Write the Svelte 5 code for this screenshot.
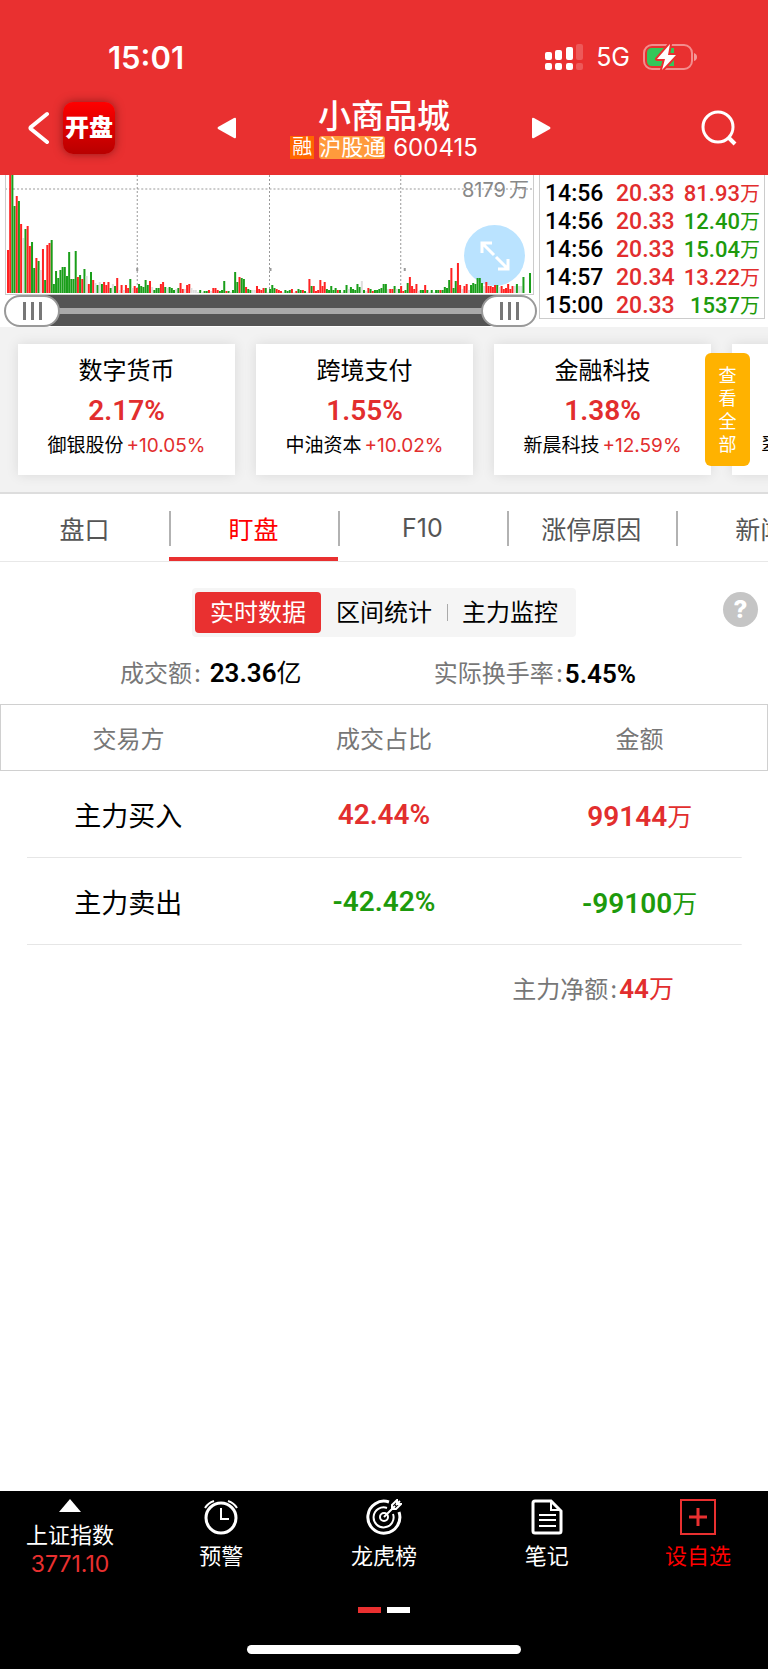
<script>
  // r = up, g = down, x = flat; number is the bar height in px
  const volume =
    'r43 r120 g120 g87 r97 g92 r69 x55 g64 r67 r47 g51 g25 r35 g32 x23 r44 g13 r48 r50 g53 g9 g22 g15 g23 g26 g26 g17 g41 g14 ' +
    'g14 g42 r16 g18 r14 g24 x17 r9 g21 r13 x10 g8 x11 g9 r11 r8 r11 g5 x9 g7 r15 x3 r8 x3 r8 r5 g14 x5 r7 r5 ' +
    'g9 g7 g6 g13 g8 r12 x6 g3 g5 g5 r9 r11 g6 x5 g6 g5 g3 x4 g5 r10 r4 x4 r8 r9 x5 x3 x3 x1 g3 x1 ' +
    'g2 g2 r3 x2 r5 r5 r3 g2 g3 g12 r2 g2 x1 g3 g21 g11 r16 g15 g14 r6 g4 g3 x3 x3 r7 r4 r3 r5 g5 x1 ' +
    'g4 g8 g5 r4 r3 r2 x1 g3 g2 g3 r4 x1 r2 g4 g3 r3 g2 x1 r14 g7 r7 r2 r3 r13 r7 r11 g4 g3 g7 g3 ' +
    'g5 r3 g3 x1 g3 g8 x4 g6 g4 g3 g9 g6 x12 g3 x2 r5 g4 r2 g3 g3 g4 g5 g9 g9 x4 r4 r4 g7 x4 g4 ' +
    'r7 r2 g3 g10 r16 r7 r4 r9 x2 g3 g3 r8 g3 x1 g3 x1 g3 g3 r3 g3 g6 g5 g13 r25 g5 g12 r30 r8 x4 r7 ' +
    'r9 x3 g8 g10 g9 g15 g15 g10 x7 r11 r7 r7 r6 r8 g8 x6 r7 r4 r5 r9 r4 r7 x7 g9 x7 x7 g16 x0 x0 g20';

  const bars = volume.split(' ').map((item, i) => ({
    kind: item[0],
    height: Number(item.slice(1)),
    x: 3 + i * 2.18
  }));

  const trades = [
    { time: '14:56', price: '20.33', amount: '81.93', up: true },
    { time: '14:56', price: '20.33', amount: '12.40', up: false },
    { time: '14:56', price: '20.33', amount: '15.04', up: false },
    { time: '14:57', price: '20.34', amount: '13.22', up: true },
    { time: '15:00', price: '20.33', amount: '1537', up: false }
  ];

  const concepts = [
    { name: '数字货币', change: '2.17%', stock: '御银股份', stockChange: '+10.05%' },
    { name: '跨境支付', change: '1.55%', stock: '中油资本', stockChange: '+10.02%' },
    { name: '金融科技', change: '1.38%', stock: '新晨科技', stockChange: '+12.59%' },
    { name: '', change: '', stock: '翠微股份', stockChange: '+10.00%' }
  ];

  const tabs = ['盘口', '盯盘', 'F10', '涨停原因', '新闻'];
  const modes = ['实时数据', '区间统计', '主力监控'];

  let activeTab = '盯盘';
  let activeMode = '实时数据';
  let rangeStart = 0;
  let rangeEnd = 100;
</script>

<div class="page">
  <header>
    <div class="status">
      <span class="clock">15:01</span>
      <svg width="38" height="26" viewBox="0 0 38 26" fill="#fff">
        <rect x="0" y="8" width="7" height="8" rx="2" />
        <rect x="10" y="6" width="7" height="10" rx="2" />
        <rect x="21" y="3" width="7" height="13" rx="2" />
        <rect x="31" y="0" width="7" height="16" rx="2" opacity=".2" />
        <rect x="0" y="19" width="7" height="7" rx="2" />
        <rect x="10" y="19" width="7" height="7" rx="2" />
        <rect x="21" y="19" width="7" height="7" rx="2" />
        <rect x="31" y="19" width="7" height="7" rx="2" opacity=".2" />
      </svg>
      <span class="network">5G</span>
      <svg width="54" height="28" viewBox="0 0 54 28">
        <rect x="1" y="2" width="48" height="24" rx="8" fill="none" stroke="#fff" stroke-opacity=".45" stroke-width="2" />
        <path d="M51 10q3 1 3 4t-3 4z" fill="#fff" opacity=".5" />
        <path d="M9 5h22v18H9q-5 0-5-5v-8q0-5 5-5z" fill="#34c759" />
        <path d="M27 1 14 16h8l-3 11 14-15h-8z" fill="#fff" stroke="#e93030" stroke-width="4" paint-order="stroke" stroke-linejoin="round" />
      </svg>
    </div>

    <nav class="title-bar">
      <div class="left">
        <button class="icon" aria-label="返回">
          <svg width="22" height="34" viewBox="0 0 22 34" fill="none" stroke="#fff" stroke-width="4" stroke-linecap="round" stroke-linejoin="round">
            <path d="M19 3 3 16q-1 1 0 2l16 13" />
          </svg>
        </button>
        <a class="logo" href="#home">开盘</a>
      </div>
      <div class="stock">
        <button class="icon" aria-label="上一只">
          <svg width="20" height="24" viewBox="0 0 20 24"><path d="M19 3v18q0 2-2 1L1 13q-1-1 0-2L17 2q2-1 2 1z" fill="#fff" /></svg>
        </button>
        <div class="name">
          <h1>小商品城</h1>
          <p><span class="tag rong">融</span><span class="tag hgt">沪股通</span><span>600415</span></p>
        </div>
        <button class="icon" aria-label="下一只">
          <svg width="20" height="24" viewBox="0 0 20 24"><path d="M1 3v18q0 2 2 1l16-9q1-1 0-2L3 2q-2-1-2 1z" fill="#fff" /></svg>
        </button>
      </div>
      <button class="icon search" aria-label="搜索">
        <svg width="36" height="36" viewBox="0 0 36 36" fill="none" stroke="#fff" stroke-width="3">
          <circle cx="17" cy="17" r="15" /><path d="m27 27 7 7" stroke-width="4" />
        </svg>
      </button>
    </nav>
  </header>

  <section class="market">
    <div class="chart">
      <svg class="bars" viewBox="0 0 532 120" preserveAspectRatio="none">
        <path d="M1 14H528M133 0V118M265 0V118M396 0V118" stroke="#999" stroke-dasharray="2 2" fill="none" />
        <path d="M1.5 0V119.5H528.5V0" stroke="#ccc" fill="none" />
        <path d="M133 93v3M266 93v3M400 93v3" stroke="#999" stroke-width="2" />
        {#each bars as bar}
          <rect class={bar.kind} x={bar.x} y={118 - bar.height} width="2" height={bar.height} />
        {/each}
      </svg>
      <span class="peak">8179<small>万</small></span>
      <button class="expand" aria-label="全屏">
        <svg width="30" height="30" viewBox="0 0 30 30" fill="none" stroke="#fff" stroke-width="3">
          <path d="M12 2H2v10M2 2l12 12M16 16l12 12M28 18v10H18" />
        </svg>
      </button>
      <div class="slider">
        <div class="track"></div>
        <input type="range" aria-label="开始时间" bind:value={rangeStart} />
        <input type="range" aria-label="结束时间" bind:value={rangeEnd} />
      </div>
    </div>

    <table class="trades">
      <tbody>
        {#each trades as trade}
          <tr>
            <td class="time">{trade.time}</td>
            <td class="price">{trade.price}</td>
            <td class="amount" class:up={trade.up} class:down={!trade.up}>{trade.amount}<small>万</small></td>
          </tr>
        {/each}
      </tbody>
    </table>
  </section>

  <section class="concepts">
    <div class="cards">
      {#each concepts as concept}
        <article class="card">
          <h2>{concept.name}</h2>
          <strong>{concept.change}</strong>
          <p>{concept.stock}<span>{concept.stockChange}</span></p>
        </article>
      {/each}
    </div>
    <button class="view-all">查看全部</button>
  </section>

  <nav class="tabs">
    {#each tabs as tab}
      <button class:active={activeTab === tab} on:click={() => (activeTab = tab)}>{tab}</button>
    {/each}
  </nav>

  <main>
    <div class="toolbar">
      <div class="modes">
        {#each modes as mode}
          <button class:active={activeMode === mode} on:click={() => (activeMode = mode)}>{mode}</button>
        {/each}
      </div>
      <button class="help" aria-label="帮助">?</button>
    </div>

    <div class="stats">
      <p>成交额<i>:</i>&nbsp;<b>23.36<small>亿</small></b></p>
      <p>实际换手率<i>:</i><b>5.45%</b></p>
    </div>

    <table class="flow">
      <thead>
        <tr><th>交易方</th><th>成交占比</th><th>金额</th></tr>
      </thead>
      <tbody>
        <tr>
          <td>主力买入</td>
          <td class="num up">42.44%</td>
          <td class="num up">99144<small>万</small></td>
        </tr>
        <tr>
          <td>主力卖出</td>
          <td class="num down">-42.42%</td>
          <td class="num down">-99100<small>万</small></td>
        </tr>
      </tbody>
    </table>
    <p class="net">主力净额<i>:</i><b class="up">44<small>万</small></b></p>
  </main>

  <footer>
    <div class="menu">
      <a class="index" href="#index">
        <svg width="22" height="14" viewBox="0 0 22 14"><path d="M11 0 22 13H0z" fill="#fff" /></svg>
        <span>上证指数</span>
        <span class="value">3771.10</span>
      </a>
      <a href="#alert">
        <svg width="36" height="36" viewBox="0 0 36 36" fill="none" stroke="#fff" stroke-width="3">
          <circle cx="18" cy="19" r="15" /><path d="M18 9v11h8M2 9q3-5 9-7M34 9q-3-5-9-7" stroke-width="2" />
        </svg>
        <span>预警</span>
      </a>
      <a href="#rank">
        <svg width="36" height="36" viewBox="0 0 36 36" fill="none" stroke="#fff" stroke-width="2">
          <path d="M23 3A16 16 0 1 0 33 13" stroke-width="3" />
          <path d="M21 9A10 10 0 1 0 27 15" />
          <circle cx="18" cy="18" r="4" />
          <path d="m18 18 11-11M26 10V6l5-5v4h4l-5 5zM30 6l4-4" />
        </svg>
        <span>龙虎榜</span>
      </a>
      <a href="#notes">
        <svg width="36" height="36" viewBox="0 0 36 36" fill="none" stroke="#fff" stroke-width="2">
          <path d="M6 2h16l10 10v20q0 2-2 2H6q-2 0-2-2V4q0-2 2-2z" stroke-width="3" />
          <path d="M22 2v9h9M10 16h17M10 21h17M10 27h17" />
        </svg>
        <span>笔记</span>
      </a>
      <a class="add" href="#add">
        <svg width="36" height="36" viewBox="0 0 36 36" fill="none" stroke="#e93030">
          <rect x="1" y="1" width="34" height="34" stroke-width="2" /><path d="M18 9v18M9 18h18" stroke-width="3" />
        </svg>
        <span>设自选</span>
      </a>
    </div>
    <div class="pager"><span class="on"></span><span></span></div>
    <div class="home"></div>
  </footer>
</div>

<style>
  :global(body) {
    background: #fff;
  }

  .page {
    min-height: 100vh;
    display: flex;
    flex-direction: column;
    overflow: hidden;
    font-family: Inter, "Noto Sans CJK SC", sans-serif;
    color: #000;
  }

  h1, h2, p {
    margin: 0;
    font-weight: 400;
  }

  i {
    font-style: normal;
  }

  button {
    border: 0;
    padding: 0;
    background: none;
    color: inherit;
    font: inherit;
    cursor: pointer;
  }

  svg {
    display: block;
    flex: none;
  }

  table {
    border-collapse: collapse;
  }

  .up {
    color: #e22e2e;
  }

  .down {
    color: #1d9a0c;
  }

  header {
    background: #e93030;
    color: #fff;
  }

  .status {
    display: flex;
    align-items: center;
    height: 46px;
    padding: 34px 71px 0 108px;
  }

  .clock {
    margin-right: auto;
    font-size: 31px;
    font-weight: 600;
  }

  .network {
    margin: 0 13px;
    font-size: 25px;
  }

  .title-bar {
    display: grid;
    grid-template-columns: 1fr 334px 1fr;
    align-items: center;
    height: 95px;
  }

  .left {
    display: flex;
    align-items: center;
    gap: 13px;
    padding-left: 28px;
  }

  .logo {
    width: 52px;
    height: 52px;
    border-radius: 10px;
    background: linear-gradient(#f00, #b80000);
    box-shadow: 0 0 10px rgba(60, 0, 0, 0.5);
    color: #fff;
    font-size: 24px;
    font-weight: 900;
    line-height: 52px;
    text-align: center;
    text-decoration: none;
  }

  .stock {
    display: flex;
    align-items: center;
    justify-content: space-between;
  }

  .name {
    padding-top: 4px;
    text-align: center;
  }

  .name h1 {
    font-size: 33px;
    font-weight: 500;
    line-height: 36px;
  }

  .name p {
    display: flex;
    justify-content: center;
    align-items: center;
    font-size: 24px;
    line-height: 28px;
  }

  .tag {
    height: 23px;
    line-height: 23px;
  }

  .rong {
    padding: 0 2px;
    margin-right: 5px;
    background: #ff6600;
    font-size: 20px;
  }

  .hgt {
    margin-right: 8px;
    border-radius: 3px;
    background: #ff9a3c;
    font-size: 22px;
  }

  .search {
    justify-self: end;
    margin-right: 31px;
  }

  .market {
    display: flex;
    gap: 2px;
    padding: 0 3px 0 4px;
  }

  .chart {
    position: relative;
    flex: 1;
  }

  .bars {
    position: relative;
    z-index: 1;
    width: 100%;
    height: 120px;
    pointer-events: none;
  }

  .r {
    fill: #f22;
  }

  .g {
    fill: #1a9e1a;
  }

  .x {
    fill: #ddd;
  }

  .peak {
    position: absolute;
    top: 3px;
    right: 8px;
    color: #888;
    font-size: 20px;
    line-height: 24px;
  }

  .peak small {
    margin-left: 3px;
    font-size: 20px;
  }

  .expand {
    position: absolute;
    top: 50px;
    right: 12px;
    display: grid;
    place-items: center;
    width: 61px;
    height: 61px;
    border-radius: 50%;
    background: #bae3ff;
  }

  .slider {
    position: relative;
    height: 32px;
  }

  .track {
    height: 31px;
    margin: 0 27px;
    background: linear-gradient(#545454 13px, #a9a9a9 13px 19px, #545454 19px);
  }

  .slider input {
    position: absolute;
    inset: 0;
    width: 100%;
    height: 32px;
    margin: 0;
    appearance: none;
    background: none;
    pointer-events: none;
  }

  .slider input::-webkit-slider-thumb {
    appearance: none;
    box-sizing: border-box;
    width: 56px;
    height: 32px;
    border: 2px solid #999;
    border-radius: 16px;
    background:
      linear-gradient(#777, #777) 17px 5px / 3px 18px no-repeat,
      linear-gradient(#777, #777) 25px 5px / 3px 18px no-repeat,
      linear-gradient(#777, #777) 33px 5px / 3px 18px no-repeat,
      #fff;
    pointer-events: auto;
  }

  .trades {
    width: 226px;
    table-layout: fixed;
    border: 1px solid #ccc;
    border-top: 0;
    font-family: Roboto, "Noto Sans CJK SC", sans-serif;
    font-size: 23px;
    font-weight: 500;
    line-height: 24px;
    align-self: flex-start;
  }

  .trades td {
    padding: 2px 0;
  }

  .trades tr:first-child td {
    padding-top: 7px;
  }

  .trades tr:last-child td {
    padding-bottom: 0;
  }

  .trades .time {
    width: 71px;
    padding-left: 5px;
  }

  .trades .price {
    width: 60px;
    color: #e22e2e;
  }

  .trades .amount {
    padding-right: 4px;
    font-size: 22px;
    text-align: right;
  }

  .trades small {
    font-size: 20px;
    font-weight: 400;
    line-height: 20px;
  }

  .concepts {
    position: relative;
    background: #f2f2f2;
    border-bottom: 2px solid #ddd;
  }

  .cards {
    display: flex;
    gap: 21px;
    padding: 17px 0 17px 18px;
    overflow: hidden;
  }

  .card {
    flex: 0 0 217px;
    height: 131px;
    box-sizing: border-box;
    padding-top: 11px;
    background: #fff;
    box-shadow: 0 0 12px rgba(0, 0, 0, 0.1);
    text-align: center;
  }

  .card h2 {
    height: 32px;
    font-size: 24px;
    line-height: 32px;
  }

  .card strong {
    display: block;
    height: 44px;
    color: #e22e2e;
    font-family: Roboto, sans-serif;
    font-size: 28px;
    font-weight: 600;
    line-height: 48px;
  }

  .card p {
    font-size: 19px;
    line-height: 30px;
    white-space: nowrap;
  }

  .card span {
    margin-left: 3px;
    color: #e22e2e;
  }

  .view-all {
    position: absolute;
    top: 26px;
    right: 18px;
    width: 45px;
    height: 113px;
    padding: 0 13px;
    border-radius: 6px;
    background: #ffb200;
    color: #fff;
    font-size: 18px;
    line-height: 23px;
  }

  .tabs {
    display: flex;
    height: 67px;
    border-bottom: 1px solid #e8e8e8;
  }

  .tabs button {
    flex: 0 0 22%;
    box-sizing: border-box;
    padding-top: 4px;
    border-bottom: 4px solid transparent;
    color: #555;
    font-size: 25px;
  }

  .tabs button + button {
    background: linear-gradient(#b2b2b2, #b2b2b2) left 17px / 2px 35px no-repeat;
  }

  .tabs .active {
    border-color: #e93030;
    color: #f00;
  }

  main {
    flex: 1;
  }

  .toolbar {
    position: relative;
    display: flex;
    justify-content: center;
    padding-top: 26px;
  }

  .modes {
    display: flex;
    align-items: center;
    padding: 4px 3px;
    border-radius: 4px;
    background: #f5f5f5;
  }

  .modes button {
    height: 41px;
    padding: 0 15px;
    border-radius: 4px;
    font-size: 24px;
    line-height: 40px;
  }

  .modes button:nth-child(3) {
    background: linear-gradient(#aaa, #aaa) left 12px / 1px 17px no-repeat;
  }

  .modes .active {
    background: #e93030;
    color: #fff;
  }

  .help {
    position: absolute;
    top: 30px;
    right: 10px;
    width: 35px;
    height: 35px;
    border-radius: 50%;
    background: #c5c5c5;
    color: #fff;
    font-size: 24px;
    font-weight: 800;
  }

  .stats {
    display: flex;
    justify-content: space-between;
    padding: 18px 132px 12px 120px;
  }

  .stats p, .net {
    display: flex;
    align-items: center;
    color: #777;
    font-size: 24px;
    line-height: 36px;
  }

  .stats i, .net i {
    width: 11px;
    text-align: center;
  }

  .stats b, .net b {
    font-family: Roboto, "Noto Sans CJK SC", sans-serif;
    font-size: 26px;
    font-weight: 600;
  }

  .stats b {
    color: #000;
  }

  small {
    font-size: 25px;
    font-weight: 400;
  }

  .flow {
    width: 100%;
    table-layout: fixed;
    text-align: center;
  }

  .flow thead {
    border: 1px solid #d0d0d0;
  }

  .flow th {
    height: 65px;
    padding: 0;
    color: #777;
    font-size: 24px;
    font-weight: 400;
  }

  .flow td {
    height: 87px;
    padding: 0;
    font-size: 27px;
  }

  .flow tbody tr {
    background: linear-gradient(#e6e6e6, #e6e6e6) center bottom / calc(100% - 52px) 1px no-repeat;
  }

  .flow .num {
    font-family: Roboto, "Noto Sans CJK SC", sans-serif;
    font-size: 28px;
    font-weight: 600;
  }

  .net {
    justify-content: flex-end;
    padding: 26px 94px 0 0;
  }

  footer {
    padding-bottom: 15px;
    background: #000;
    color: #fff;
  }

  .menu {
    display: grid;
    grid-template-columns: 140px 1fr 1fr 1fr 140px;
    height: 116px;
  }

  .menu a {
    display: flex;
    flex-direction: column;
    align-items: center;
    gap: 6px;
    padding-top: 8px;
    color: #fff;
    font-size: 22px;
    line-height: 30px;
    text-decoration: none;
  }

  .menu .index {
    gap: 0;
  }

  .index svg {
    margin-bottom: 7px;
  }

  .menu .value {
    color: #e93030;
    font-size: 23px;
    line-height: 28px;
  }

  .menu .add {
    color: #f00;
  }

  .pager {
    display: flex;
    justify-content: center;
    gap: 6px;
  }

  .pager span {
    width: 23px;
    height: 6px;
    background: #fff;
  }

  .pager .on {
    background: #e93030;
  }

  .home {
    width: 274px;
    height: 9px;
    margin: 32px auto 0;
    border-radius: 5px;
    background: #fff;
  }
</style>
